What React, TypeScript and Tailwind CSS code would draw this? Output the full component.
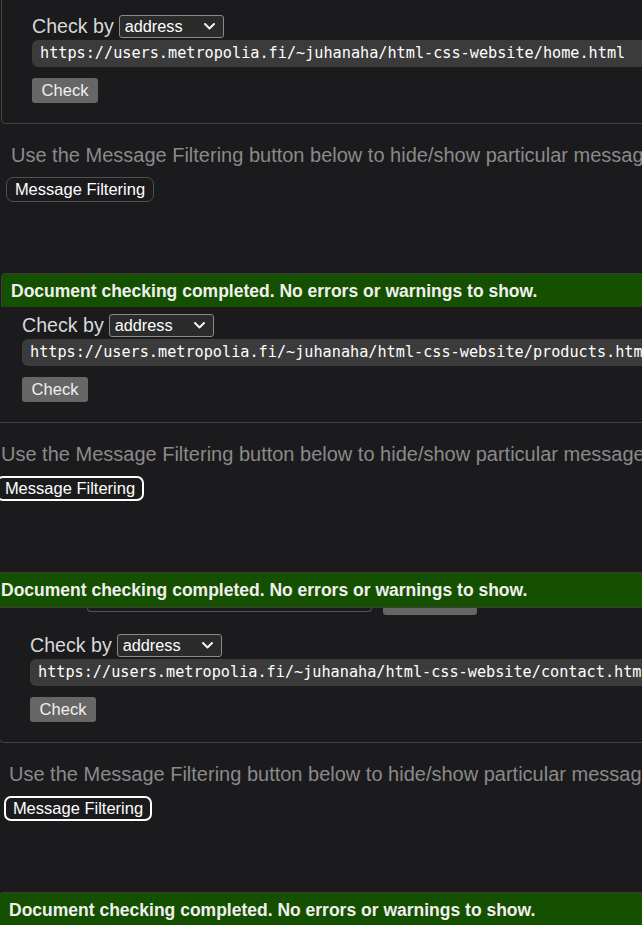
const sans = "font-['Liberation_Sans',Arial,sans-serif]";

const AddressSelect = () => (
  <div className="ml-[5px] flex h-[23px] w-[105px] items-center justify-between rounded-[3px] border border-[#8a8a8a] bg-[#2b2b2b] pl-[5px] pr-[8px]">
    <span className="text-[16.3px] leading-none text-white">address</span>
    <svg width="11" height="7" viewBox="0 0 11 7" fill="none">
      <path d="M1 1l4.5 4.5L10 1" stroke="#f2f2f2" strokeWidth="2" strokeLinecap="round" strokeLinejoin="round" />
    </svg>
  </div>
);

const Page = ({ url, focused }: { url: string; focused: boolean }) => (
  <div className={`${sans} w-[760px]`}>
    {/* bits of the previous form, only seen in the last crop */}
    <div className="flex h-[7px] items-start">
      <div className="ml-[88px] h-[4px] w-[285px] rounded-b-[6px] border-x border-b border-[#555]" />
      <div className="ml-[11px] h-[7px] w-[94px] rounded-b-[3px] bg-[#666]" />
    </div>

    <div className="rounded-bl-[5px] border-b border-l border-[#424242] pb-[20px] pl-[30px] pt-[19px]">
      <div className="flex h-[23px] items-center">
        <span className="text-[19.6px] leading-none text-[#d8d8d8]">Check by</span>
        <AddressSelect />
      </div>
      <div className="mt-[2px] flex h-[27px] w-[700px] items-center rounded-l-[6px] bg-[#3b3b3b] pl-[8px] font-['DejaVu_Sans_Mono',monospace] text-[15.2px] text-white">
        {url}
      </div>
      <button className="mt-[11px] h-[25px] w-[66px] rounded-[3px] bg-[#666] text-[16.5px] text-[#f0f0f0]">
        Check
      </button>
    </div>

    <p className="mt-[20px] whitespace-nowrap pl-[10px] text-[20px] leading-[22px] text-[#8a8a8a]">
      Use the Message Filtering button below to hide/show particular messages
    </p>
    <div className="mt-[11px] pl-[5px]">
      {focused ? (
        <button className="h-[25px] w-[148px] rounded-[7px] border-2 border-white text-[16.5px] leading-none text-white">
          Message Filtering
        </button>
      ) : (
        <button className="h-[25px] w-[148px] rounded-[7px] border border-[#505050] text-[16.5px] leading-none text-white">
          Message Filtering
        </button>
      )}
    </div>

    <div className="mt-[71px] flex h-[36px] items-center rounded-tl-[4px] border border-[#3c3c3c] bg-[#155000] pl-[9px] text-[17.5px] font-bold text-[#f0f0f0]">
      Document checking completed. No errors or warnings to show.
    </div>
  </div>
);

export default function App() {
  return (
    <div className="h-[925px] w-[642px] overflow-hidden bg-[#1b1b1d]">
      <div className="h-[307px] overflow-hidden">
        <div className="-mt-[11px] ml-[1px]">
          <Page url="https://users.metropolia.fi/~juhanaha/html-css-website/home.html" focused={false} />
        </div>
      </div>
      <div className="h-[301px] overflow-hidden">
        <div className="-ml-[9px] -mt-[19px]">
          <Page url="https://users.metropolia.fi/~juhanaha/html-css-website/products.html" focused={true} />
        </div>
      </div>
      <div className="h-[317px] overflow-hidden">
        <div className="-ml-[1px]">
          <Page url="https://users.metropolia.fi/~juhanaha/html-css-website/contact.html" focused={true} />
        </div>
      </div>
    </div>
  );
}
